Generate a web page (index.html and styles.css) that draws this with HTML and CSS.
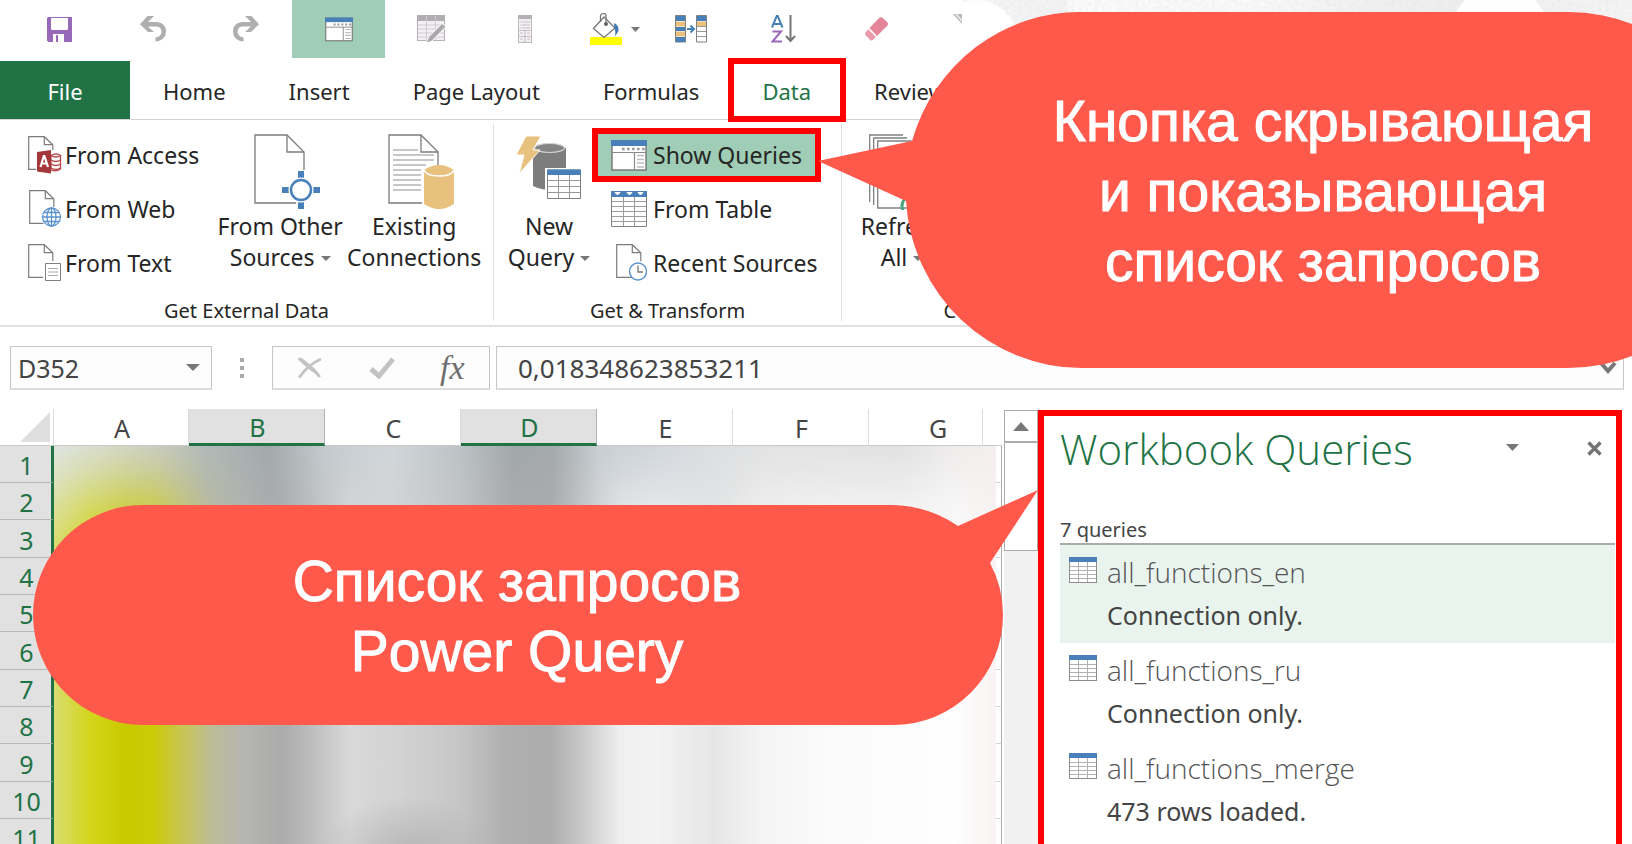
FILE: index.html
```html
<!DOCTYPE html>
<html lang="ru">
<head>
<meta charset="utf-8">
<title>Power Query — Workbook Queries</title>
<link rel="stylesheet" href="styles.css">
</head>
<body>
<svg class="defs" aria-hidden="true">
  <symbol id="i-window" viewBox="0 0 36 31">
    <rect x="1" y="1" width="34" height="29" fill="#fff" stroke="#6d6d6d" stroke-width="1.3"/>
    <rect width="36" height="6" fill="#4a80ba"/>
    <path d="M11 9h23" stroke="#9a9a9a" stroke-width="2.4" stroke-dasharray="2.6 2.4"/>
    <path d="M1 12.500h34M23.500 12.500v18" stroke="#8a8a8a" stroke-width="1.2"/>
    <path d="M26 15.500h7M26 19.500h7M26 23h7M26 27h7" stroke="#bdbdbd" stroke-width="1.4"/>
  </symbol>
  <symbol id="i-table" viewBox="0 0 28 26">
    <rect x=".5" y=".5" width="27" height="25" fill="#fff" stroke="#8d8d8d"/>
    <rect width="28" height="5" fill="#4a80ba"/>
    <path d="M1 9.500h26M1 13.500h26M1 17.500h26M1 21.500h26M9.500 5v20M18.500 5v20" stroke="#b0b0b0"/>
  </symbol>
  <symbol id="i-page" viewBox="0 0 26 34">
    <path d="M.7.700h15.600l8.500 8V33.300H.7z" fill="#fff" stroke="#7c7c7c" stroke-width="1.2"/>
    <path d="M16.300.700v8h8.500" fill="none" stroke="#7c7c7c" stroke-width="1.2"/>
  </symbol>
</svg>
<div class="app">
  <header class="toolbar">
    <button class="tool" aria-label="Save"><svg width="25" height="25" viewBox="0 0 25 25"><path d="M0 1.500Q0 0 1.500 0H25V25H1.500L0 23.500z" fill="#9868b9"/><path d="M4 1h17v10.500q0 1.500-1.500 1.500h-14Q4 13 4 11.500zM6 17h11v8H11v-7H9v7H6z" fill="#fff"/></svg></button>
    <button class="tool" aria-label="Undo"><svg width="26" height="26" viewBox="0 0 26 26"><path d="M7.500 0H14L8 6H17Q26 7 26 15.500 25.500 24.500 15.500 25.500V21.500Q21.500 20.500 21.500 15.500 21 10.500 16 10.500H8L14 16H8L0 8.200z" fill="#b0aeb0"/></svg></button>
    <button class="tool" aria-label="Redo"><svg width="26" height="26" viewBox="0 0 26 26"><path d="M18.500 0H12L18 6H9Q0 7 0 15.500 .5 24.500 10.500 25.500V21.500Q4.500 20.500 4.500 15.500 5 10.500 10 10.500H18L12 16H18L26 8.200z" fill="#b0aeb0"/></svg></button>
    <button class="tool tool-active" aria-label="Show Queries"><svg width="28" height="25"><use href="#i-window"/></svg></button>
    <button class="tool" aria-label="Edit table"><svg width="29" height="29" viewBox="0 0 29 29"><rect x=".5" y=".5" width="27" height="25" fill="#f4eff4" stroke="#b4b2b4"/><path d="M0 0h28v6H0z" fill="#b0aeb0"/><path d="M1 10h26M1 14h26M1 18h26M1 22h26M9.500 1v24M18.500 1v24" stroke="#cfcbcf"/><path d="M9 28.500l2.500-6.500L25 8.500l4 3L15 26z" fill="#aaa8aa" stroke="#fff"/></svg></button>
    <button class="tool" aria-label="Form"><svg width="14" height="28" viewBox="0 0 14 28"><rect x=".5" y=".5" width="13" height="27" fill="#f3eff3" stroke="#bcb9bc"/><path d="M0 0h14v4H0z" fill="#b4b2b4"/><path d="M2 7h1M4 7h8M2 10h1M4 10h8M2 13h1M4 13h8M0 15.500h14M7 15v12M0 21.500h14M2 18h3M9 18h3M2 24h3M9 24h3" stroke="#c5c1c5" stroke-width="1.200"/></svg></button>
    <button class="tool tool-fill" aria-label="Fill color"><svg width="32" height="32" viewBox="0 0 32 32"><path d="M0 24h32v8H0z" fill="#ff0"/><path d="M14 4L25 15 14 24.500 3.500 15.500z" fill="#fff" stroke="#777" stroke-width="1.300"/><path d="M10.500 9V2.500Q11 .7 13.500.7 16 .7 16 2.500V10" fill="none" stroke="#777" stroke-width="1.300"/><circle cx="16" cy="11" r="2" fill="#666"/><path d="M24 10q5 2 4.500 8l-3.500 5.500q1-5-.5-8.500z" fill="#3f78b5"/></svg><svg width="9" height="5" viewBox="0 0 9 5"><path d="M0 0h9L4.500 5z" fill="#777"/></svg></button>
    <button class="tool" aria-label="Text to columns"><svg width="32" height="28" viewBox="0 0 32 28"><path d="M.5.500h10v26.500H.5zM21.500.500h10v26.500h-10z" fill="#fff" stroke="#808080"/><path d="M1 1h9v5H1zM1 12h9v4H1zM1 22h9v5H1zM22 1h9v5h-9z" fill="#4680b9"/><path d="M1 6.500h9v5H1zM1 16.500h9v5H1zM22 6.500h9v5h-9z" fill="#e9c17d"/><path d="M22 11.500h9M22 16.500h9M22 21.500h9" stroke="#999"/><path d="M12 14h6M15.500 10.500L19 14l-3.500 3.500" fill="none" stroke="#4680b9" stroke-width="2"/></svg></button>
    <button class="tool" aria-label="Sort A to Z"><svg width="26" height="28" viewBox="0 0 26 28"><path d="M1 12.500L5.700 1h1L11.500 12.500M2.800 9h7" fill="none" stroke="#4680b9" stroke-width="2"/><path d="M1.500 16.500h8.500L1.500 26.500H11" fill="none" stroke="#9868b9" stroke-width="2"/><path d="M19.500 0v26M15 21l4.500 5 4.500-5" fill="none" stroke="#767676" stroke-width="2"/></svg></button>
    <button class="tool" aria-label="Clear"><svg width="24" height="24" viewBox="0 0 24 24"><path d="M14 1.200q2-1.800 4 0l4 3.800q2 2 0 4L12 19 4.500 11z" fill="#e5859a"/><path d="M3.300 12.300l7.500 7.700-3 3q-1.300 1-2.600 0L.7 18.600q-1.200-1.600 0-3.300z" fill="#eb9aaa"/></svg></button>
    <svg class="fragment" width="9" height="10" viewBox="0 0 9 10"><path d="M0 0h9v10z" fill="#b8b8b8"/><path d="M3 0l6 7" stroke="#eee" stroke-width="1.500"/></svg>
  </header>
  <svg class="backdrop" viewBox="0 0 670 60" preserveAspectRatio="xMinYMin slice" aria-hidden="true">
    <filter id="grain" x="0" y="0" width="100%" height="100%"><feTurbulence type="fractalNoise" baseFrequency=".3" numOctaves="2" seed="4"/><feColorMatrix values="0 0 0 0 .7  0 0 0 0 .7  0 0 0 0 .7  0 0 0 .5 -.08"/></filter>
    <linearGradient id="shade"><stop offset="0" stop-color="#f8f8f8"/><stop offset=".155" stop-color="#f6f6f6"/><stop offset=".16" stop-color="#fefefe"/><stop offset=".45" stop-color="#fcfcfc"/><stop offset=".6" stop-color="#f3f3f3"/><stop offset=".75" stop-color="#f0f0f0"/><stop offset="1" stop-color="#f8f8f8"/></linearGradient>
    <rect width="670" height="60" fill="url(#shade)"/>
    <path d="M0 0h103v60H0zM380 0h290v60H380z" filter="url(#grain)"/>
    <circle cx="14" cy="42" r="42" fill="#fff"/>
    <circle cx="538" cy="36" r="50" fill="#fefefe"/>
  </svg>

  <nav class="tabs">
    <button class="tab tab-file">File</button>
    <button class="tab">Home</button>
    <button class="tab">Insert</button>
    <button class="tab">Page Layout</button>
    <button class="tab">Formulas</button>
    <button class="tab tab-data">Data</button>
    <button class="tab">Review</button>
  </nav>

  <section class="ribbon">
    <div class="group group-external">
      <div class="group-body">
        <div class="stack">
          <button class="row-button"><svg width="34" height="38" viewBox="0 0 34 38"><use href="#i-page" width="26" height="34"/><path d="M8 14h26v24H8z" fill="#fff"/><path d="M23 19v15q5 2 9.500-1V19" fill="#fff" stroke="#b8484a" stroke-width="1.300"/><path d="M23 19.500q5-3 9.500 0-4.500 3-9.500 0M23 24q5 3 9.500 0M23 28q5 3 9.500 0M23 32q5 3 9.500 0" fill="none" stroke="#b8484a" stroke-width="1.300"/><path d="M9 16l14-2v23.500L9 35.500z" fill="#a4373a"/><path d="M12.500 31l3.300-11h.6l3.600 11M13.800 27.500h5" fill="none" stroke="#fff" stroke-width="2.200"/></svg>From Access</button>
          <button class="row-button"><svg width="34" height="38" viewBox="0 0 34 38"><use href="#i-page" x="1" width="26" height="34"/><circle cx="23.500" cy="27" r="10.500" fill="#fff"/><g fill="none" stroke="#5b93cd" stroke-width="1.300"><circle cx="23.500" cy="27" r="9"/><ellipse cx="23.500" cy="27" rx="4.500" ry="9"/><path d="M23.500 18v18M14.500 27h18M16 22.500h15M16 31.500h15"/></g></svg>From Web</button>
          <button class="row-button"><svg width="34" height="38" viewBox="0 0 34 38"><use href="#i-page" width="26" height="34"/><path d="M15 17h19v21H15z" fill="#fff"/><path d="M17.500 19.500h15v17h-15z" fill="#fff" stroke="#808080"/><path d="M20 24.500h10M20 28h10M20 31.500h10" stroke="#aaa"/></svg>From Text</button>
        </div>
        <button class="big-button big-other"><svg width="66" height="76" viewBox="0 0 66 76"><path d="M1 1h32l17 17v51H1z" fill="#fff" stroke="#7c7c7c" stroke-width="1.300"/><path d="M33 1v17h17" fill="none" stroke="#7c7c7c" stroke-width="1.300"/><path d="M42 36h10v40H42z" fill="#fff"/><path d="M47 37v38M28 56h38" stroke="#4a80ba" stroke-width="6"/><circle cx="47" cy="56" r="12.500" fill="#fff"/><circle cx="47" cy="56" r="10" fill="#fff" stroke="#4a80ba" stroke-width="2.500"/></svg><span>From Other<br>Sources <i class="caret"></i></span></button>
        <button class="big-button big-existing"><svg width="66" height="76" viewBox="0 0 66 76"><path d="M1 1h32l17 17v51H1z" fill="#fff" stroke="#7c7c7c" stroke-width="1.300"/><path d="M33 1v17h17" fill="none" stroke="#7c7c7c" stroke-width="1.300"/><path d="M5 16h25M5 21h41M5 26h41M5 31h33M5 36h28M5 41h28M5 46h28M5 51h28M5 56h28" stroke="#b5b5b5" stroke-width="1.300"/><path d="M34 36q16-9 32 0v36q-16 8-32 0z" fill="#fff"/><path d="M36 36q15-10 30 0v34q-15 10-30 0z" fill="#e9c17f"/><path d="M36 36q2 6 15 6t15-6" fill="none" stroke="#fff" stroke-width="1.500"/></svg><span>Existing<br>Connections</span></button>
      </div>
      <div class="group-label">Get External Data</div>
    </div>
    <div class="group group-transform">
      <div class="group-body">
        <button class="big-button big-new"><svg width="66" height="76" viewBox="0 0 66 76"><path d="M17 14q16-8 33 0v38q-16 8-33 0z" fill="#7d7d7d"/><ellipse cx="33.500" cy="14" rx="15" ry="4.500" fill="#858585" stroke="#d4d4d4" stroke-width="1.200"/><path d="M10 2h15l-8 14h7L3 40l5-19H0z" fill="#e9c17f" stroke="#fff"/><path d="M29 34h37v33H29z" fill="#fff"/><path d="M31.500 36h33v28.500h-33z" fill="#fff" stroke="#808080"/><path d="M31 35.500h34v5.500H31z" fill="#4a80ba"/><path d="M32 46.500h32M32 52.500h32M32 58.500h32M42.500 41v23M53.500 41v23" stroke="#999"/></svg><span>New<br>Query <i class="caret"></i></span></button>
        <div class="stack">
          <button class="row-button row-active"><svg width="36" height="31"><use href="#i-window"/></svg>Show Queries</button>
          <button class="row-button"><svg width="36" height="36" viewBox="0 0 36 36"><path d="M.5.500h35v35H.5z" fill="#fff" stroke="#808080"/><path d="M0 0h36v6H0z" fill="#4a80ba"/><path d="M4 1.500h5L6.500 4zM16 1.500h5L18.500 4zM27 1.500h5L29.500 4z" fill="#fff" stroke="#fff"/><path d="M1 10.500h34M1 15.500h34M1 20.500h34M1 25.500h34M1 30.500h34M12.500 6v29M23.500 6v29" stroke="#9d9d9d"/></svg>From Table</button>
          <button class="row-button"><svg width="36" height="38" viewBox="0 0 36 38"><use href="#i-page" x="5" width="26" height="34"/><circle cx="28" cy="27" r="10" fill="#fff"/><circle cx="27" cy="27.500" r="8.500" fill="#fff" stroke="#5b93cd" stroke-width="1.400"/><path d="M27 21.500v6.500h5" fill="none" stroke="#777" stroke-width="1.300"/></svg>Recent Sources</button>
        </div>
      </div>
      <div class="group-label">Get &amp; Transform</div>
    </div>
    <div class="group group-connections">
      <div class="group-body">
        <button class="big-button big-refresh"><svg width="66" height="76" viewBox="0 0 66 76"><path d="M.7 68V1H34" fill="none" stroke="#808080" stroke-width="1.300"/><path d="M4.700 71V4H38" fill="none" stroke="#808080" stroke-width="1.300"/><path d="M8.700 74V7H42v67z" fill="#fff" stroke="#808080" stroke-width="1.300"/><circle cx="44" cy="72" r="11" fill="none" stroke="#4ba57b" stroke-width="3"/></svg><span>Refresh<br>All <i class="caret"></i></span></button>
      </div>
      <div class="group-label">Connections</div>
    </div>
  </section>

  <section class="formula-bar">
    <label class="name-box"><input aria-label="Name box" value="D352"><svg width="14" height="7" viewBox="0 0 14 7"><path d="M0 0h14L7 7z" fill="#777"/></svg></label>
    <svg class="dots" width="4" height="20" viewBox="0 0 4 20"><path d="M0 0h4v4H0zM0 8h4v4H0zM0 16h4v4H0z" fill="#aaa"/></svg>
    <div class="fx-box">
      <button aria-label="Cancel"><svg width="23" height="22" viewBox="0 0 23 22"><path d="M0 2Q2-1 5 2 12 7 23 20 11 14 0 2z" fill="#c3c3c3"/><path d="M2 2.500Q14 9 21 19M22 2.500Q10 8 2 19.500" fill="none" stroke="#c3c3c3" stroke-width="3" stroke-linecap="round"/></svg></button>
      <button aria-label="Enter"><svg width="26" height="22" viewBox="0 0 26 22"><path d="M2 12l8 7L24 2" fill="none" stroke="#c3c3c3" stroke-width="5"/></svg></button>
      <button class="fx" aria-label="Insert function">fx</button>
    </div>
    <div class="formula"><input aria-label="Formula" value="0,018348623853211"><svg width="18" height="14" viewBox="0 0 18 14"><path d="M2 2l7 8 7-8" fill="none" stroke="#777" stroke-width="4"/></svg></div>
  </section>

  <main class="workspace">
    <table class="sheet">
      <colgroup><col class="c-head"><col class="c-a"><col class="c-n"><col class="c-n"><col class="c-n"><col class="c-n"><col class="c-n"><col class="c-g"><col class="c-rest"><col class="c-end"></colgroup>
      <thead><tr><th class="corner"><svg width="30" height="30" viewBox="0 0 30 30"><path d="M30 0v30H0z" fill="#dedede"/></svg></th><th>A</th><th class="sel">B</th><th>C</th><th class="sel">D</th><th>E</th><th>F</th><th class="g">G</th><th class="end" colspan="2"></th></tr></thead>
      <tbody>
        <tr><th>1</th><td class="cells" colspan="8" rowspan="11"></td><td></td></tr>
        <tr><th>2</th><td></td></tr><tr><th>3</th><td></td></tr><tr><th>4</th><td></td></tr><tr><th>5</th><td></td></tr><tr><th>6</th><td></td></tr><tr><th>7</th><td></td></tr><tr><th>8</th><td></td></tr><tr><th>9</th><td></td></tr><tr><th>10</th><td></td></tr><tr><th>11</th><td></td></tr>
      </tbody>
    </table>
    <div class="scrollbar">
      <button class="scroll-up" aria-label="Scroll up"><svg width="16" height="9" viewBox="0 0 16 9"><path d="M8 0l8 9H0z" fill="#777"/></svg></button>
      <div class="thumb"></div>
    </div>
    <aside class="panel">
      <div class="panel-head">
        <h1>Workbook Queries</h1>
        <button class="panel-menu" aria-label="Pane options"><svg width="13" height="7" viewBox="0 0 13 7"><path d="M0 0h13L6.500 7z" fill="#777"/></svg></button>
        <button class="panel-close" aria-label="Close"><svg width="15" height="15" viewBox="0 0 15 15"><path d="M1.500 1.500l12 12M13.500 1.500l-12 12" stroke="#737373" stroke-width="3.400"/></svg></button>
      </div>
      <p class="count">7 queries</p>
      <ul class="queries">
        <li class="current"><svg width="28" height="26"><use href="#i-table"/></svg><div><h2>all_functions_en</h2><p>Connection only.</p></div></li>
        <li><svg width="28" height="26"><use href="#i-table"/></svg><div><h2>all_functions_ru</h2><p>Connection only.</p></div></li>
        <li><svg width="28" height="26"><use href="#i-table"/></svg><div><h2>all_functions_merge</h2><p>473 rows loaded.</p></div></li>
      </ul>
    </aside>
  </main>

  <div class="callout callout-button">
    <svg width="930" height="356" viewBox="0 0 930 356" aria-hidden="true"><path d="M0 149L94 129A175 178 0 0 1 264 0H750A178 178 0 0 1 750 356H264A176 178 0 0 1 88 189z" fill="#ff594b"/></svg>
    <p>Кнопка скрывающая<br>и показывающая<br>список запросов</p>
  </div>
  <div class="callout callout-list">
    <svg width="1006" height="235" viewBox="0 0 1006 235" aria-hidden="true"><path d="M110 15H860Q896 16 925 36L1005 0 957 73Q970 97 970 125A110 110 0 0 1 860 235H110A110 110 0 0 1 110 15z" fill="#ff594b"/></svg>
    <p>Список запросов<br>Power Query</p>
  </div>
</div>
</body>
</html>
```
FILE: styles.css
```css
* { box-sizing: border-box; }

body {
  margin: 0;
  background: #fff;
  color: #262626;
  font-family: "Noto Sans", "Open Sans", sans-serif;
  font-size: 23px;
}

button, input {
  border: 0;
  padding: 0;
  background: none;
  color: inherit;
  font: inherit;
}

h1, h2, p, ul { margin: 0; padding: 0; font-weight: 400; }
svg { display: block; flex: none; }
.defs { position: absolute; width: 0; height: 0; }

.app {
  position: relative;
  display: flex;
  flex-direction: column;
  height: 100vh;
  overflow: hidden;
}

/* Quick access toolbar */
.toolbar { display: flex; height: 58px; padding-left: 13px; margin-bottom: 3px; }
.tool { display: flex; align-items: center; justify-content: center; width: 93px; flex: none; }
.tool-active { background: #9fcdb5; }
.tool-fill { width: 73px; justify-content: flex-start; gap: 9px; padding-left: 19px; }
.fragment { margin: 14px 0 0 30px; }

.backdrop { position: absolute; top: 0; left: 962px; width: calc(100% - 962px); height: 60px; z-index: 0; }

/* Tabs */
.tabs { display: flex; height: 59px; border-bottom: 1px solid #d4d4d4; position: relative; z-index: 1; background: #fff; font-size: 22px; }
.tab { padding: 2px 32px 0 31px; }
.tab-file { width: 130px; margin-right: 2px; padding: 2px 32px 0; background: #217346; color: #fff; }
.tab-data { color: #217346; outline: 6px solid #f00; outline-offset: -3px; position: relative; z-index: 1; }

/* Ribbon */
.ribbon { display: flex; height: 207px; padding-top: 4px; border-bottom: 2px solid #e1e1e1; background: #fff; position: relative; }
.group { display: flex; flex-direction: column; height: 197px; border-right: 1px solid #e1e1e1; }
.group-external { width: 494px; }
.group-transform { width: 348px; }
.group-connections { flex: 1; border: 0; }
.group-body { display: flex; flex: none; height: 172px; }
.group-external .group-body { padding-left: 28px; }
.group-transform .group-body { padding-left: 10px; }
.group-connections .group-body { padding-left: 8px; }
.group-label { font-size: 20px; line-height: 30px; text-align: center; }
.group-connections .group-label { width: 320px; }
.stack { display: flex; flex-direction: column; align-items: flex-start; gap: 12px; padding-top: 10px; }
.row-button { display: flex; align-items: center; gap: 3px; height: 42px; white-space: nowrap; text-align: left; }
.group-transform .row-button { gap: 6px; padding: 0 13px; }
.row-active { background: #9fcdb5; outline: 6px solid #f00; }
.big-button { display: flex; flex-direction: column; align-items: center; justify-content: flex-start; gap: 1px; padding-top: 10px; line-height: 31px; white-space: nowrap; }
.big-other { width: 130px; margin-left: 16px; }
.big-existing { width: 138px; }
.big-other svg, .big-existing svg { margin-left: 14px; }
.big-new { width: 90px; margin-right: 4px; }
.big-refresh { width: 104px; }
.caret { display: inline-block; border: 5px solid transparent; border-top-color: #777; border-bottom: 0; vertical-align: 5px; }

/* Formula bar */
.formula-bar { display: flex; align-items: center; height: 44px; margin: 19px 8px 19px 10px; flex: none; font-size: 25px; color: #444; }
.name-box, .fx-box, .formula { display: flex; align-items: center; height: 44px; border: 1px solid #c6c6c6; border-bottom: 2px solid #dcdcdc; background: #fdfdfd; }
.name-box { width: 202px; padding: 0 11px 0 7px; }
.name-box input { flex: 1; min-width: 0; }
.dots { margin: 0 28px; }
.fx-box { width: 218px; padding-left: 25px; }
.fx-box button { display: flex; width: 71px; align-items: center; }
.fx-box .fx { font: italic 34px "Liberation Serif", serif; width: 46px; color: #6f6f6f; }
.formula { flex: 1; margin-left: 6px; padding: 0 6px 0 21px; }
.formula input { flex: 1; min-width: 0; font-size: 26px; }

/* Worksheet */
.workspace { display: flex; flex: 1; min-height: 0; }
.sheet { width: 1004px; flex: none; align-self: flex-start; table-layout: fixed; border-collapse: separate; border-spacing: 0; border-right: 2px solid #fff; color: #444; font-size: 25px; line-height: 34px; }
.sheet th, .sheet td { padding: 0; font-weight: 400; }
.c-head { width: 54px; }
.c-a { width: 135px; }
.c-n { width: 136px; }
.c-g { width: 114px; }
.c-rest { width: 13px; }
.c-end { width: 6px; }
.sheet thead th { height: 37px; padding: 2px 0 0 2px; line-height: 32px; border-right: 1px solid #dcdcdc; border-bottom: 1px solid #c9c9c9; }
.sheet thead .corner { padding-top: 0; }
.sheet thead .corner svg { margin-left: 18px; }
.sheet thead .sel { padding-top: 3px; line-height: 31px; background: #e1e1e1; color: #217346; border-right-color: #b5b5b5; border-bottom: 3px solid #217346; }
.sheet thead .g { padding-left: 25px; }
.sheet thead .end { border-right: 0; }
.sheet tbody th { height: 37px; padding: 2px 0 0 2px; background: #e1e1e1; color: #217346; border-right: 3px solid #217346; border-bottom: 1px solid #b8b8b8; }
.sheet tbody tr:nth-child(3n) th { height: 38px; }
.sheet tbody td { border-bottom: 1px solid #d4d4d4; border-right: 1px solid #ababab; }
.sheet tbody .cells {
  position: relative;
  border: 0;
  background:
    radial-gradient(ellipse 90px 60px at 355px 410px, #a8a8a8aa, #a8a8a800),
    linear-gradient(to right, #d9dc70 0, #d3d61c 35px, #caca00 70px, #cbcb08 100px, #c6c45c 132px, #bcbc96 158px, #b5b5b2 190px, #ababab 228px, #bcbcbc 256px, #d9d9d9 296px, #d2d2d2 346px, #c6c6c6 406px, #b0b0b0 450px, #acacac 495px, #c6c6c6 526px, #efefef 566px, #f3f3f3 600px, #e6e6e6 660px, #f5f5f5 710px, #fbfbfb 780px, #fefefe 900px, #f8f4f3 942px);
}
.cells::before {
  content: "";
  position: absolute;
  inset: 0 0 auto 0;
  height: 100px;
  background: linear-gradient(to right, #dfe4e0 0, #d3d7c2 66px, #c6cabd 110px, #b2b9b8 150px, #a3a9ab 215px, #c3c9cd 270px, #d1d6da 336px, #bcc2c5 406px, #a2a7a9 460px, #a5aaac 500px, #c8ced3 546px, #d3d8dd 610px, #dddfe1 666px, #e3e3e3 726px, #e2e2e2 846px, #efedec 906px, #f4efee 942px);
  -webkit-mask-image: linear-gradient(#000 0, #000c 25px, #0000 100px);
  mask-image: linear-gradient(#000 0, #000c 25px, #0000 100px);
}

.scrollbar { width: 34px; flex: none; margin-top: 1px; background: #f1f1f1; }
.scroll-up { display: flex; align-items: center; justify-content: center; width: 100%; height: 32px; border: 1px solid #ababab; background: #fff; }
.thumb { height: 109px; border: 1px solid #ababab; background: #fff; }

/* Query pane */
.panel { flex: 1; min-width: 0; margin: 1px 10px -20px 0; padding: 12px 1px 0 16px; border: 6px solid #f00; background: #fff; }
.panel-head { display: flex; align-items: flex-start; height: 48px; padding-right: 13px; }
.panel-head h1 { flex: 1; color: #217346; font-family: "Open Sans", "Noto Sans", sans-serif; font-weight: 300; font-size: 42px; line-height: 42px; white-space: nowrap; }
.panel-menu { margin: 16px 68px 0 0; }
.panel-close { margin-top: 13px; }
.count { margin-top: 40px; padding-top: 1px; border-bottom: 2px solid #ababab; font-size: 20px; line-height: 26px; color: #444; }
.queries { list-style: none; }
.queries li { display: flex; gap: 10px; height: 98px; padding: 12px 9px 0; color: #444; }
.queries .current { background: #e9f4ee; }
.queries div { margin-top: -6px; }
.queries h2 { font-family: "Open Sans", "Noto Sans", sans-serif; font-weight: 300; font-size: 28px; line-height: 42px; color: #555; }
.queries p { font-size: 25px; line-height: 44px; }

/* Callouts */
.callout { position: absolute; z-index: 3; color: #fff; font: 57px/70px "Liberation Sans", Arial, sans-serif; text-align: center; -webkit-text-stroke: 1px #fff; }
.callout p { position: absolute; inset: 0; white-space: nowrap; }
.callout-button { top: 12px; left: 818px; width: 930px; }
.callout-button p { padding: 74px 0 0 80px; }
.callout-list { top: 490px; left: 33px; width: 1006px; }
.callout-list p { padding: 56px 38px 0 0; }
```
